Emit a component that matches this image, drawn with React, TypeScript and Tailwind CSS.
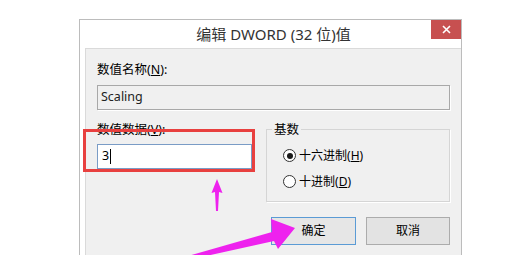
import React from 'react';

const font = "font-['Noto_Sans','Noto_Sans_CJK_SC',sans-serif]";

function Radio({ checked, label, accel }: { checked?: boolean; label: string; accel: string }) {
  return (
    <div className="flex h-[17px] items-center">
      <span className="flex h-[13px] w-[13px] items-center justify-center rounded-full border border-[#333] bg-white">
        {checked && <span className="h-[6px] w-[6px] rounded-full bg-[#1a1a1a]" />}
      </span>
      <span className="ml-[3px] text-[12px] leading-[17px] text-black">
        {label}(<span className="underline">{accel}</span>)
      </span>
    </div>
  );
}

export default function App() {
  return (
    <div className={`relative h-[255px] w-[521px] overflow-hidden bg-white pl-[79px] pt-[19px] ${font}`}>
      <div className="flex h-[260px] w-[383px] flex-col border-l border-r border-t border-[#bcbcbc] bg-white">
        {/* title bar */}
        <div className="flex h-[28px] items-start">
          <div className="w-[30px]" />
          <div className="flex-1 pl-[6px] pt-[4px] text-center text-[15px] leading-[20px] text-[#333]">
            编辑 DWORD (32 位)值
          </div>
          <div className="flex h-[19px] w-[30px] items-center justify-center bg-[#c75050]">
            <svg width="9" height="9" viewBox="0 0 9 9">
              <path d="M1 1 L8 8 M8 1 L1 8" stroke="#fff" strokeWidth="1.6" />
            </svg>
          </div>
        </div>

        {/* client area */}
        <div className="ml-[5px] flex-1 border-l border-t border-[#dadada] bg-[#f0f0f0] px-[11px] pt-[12px]">
          <div className="text-[12.5px] leading-[17px] text-black">
            数值名称(<span className="underline">N</span>):
          </div>
          <div className="mt-[7px] flex h-[25px] items-center border border-[#a8a8a8] bg-[#f0f0f0] pl-[3px] text-[12.5px] text-[#222] shadow-[1px_1px_0_#fff]">
            Scaling
          </div>

          <div className="mt-[11px] flex gap-[14px]">
            <div className="relative w-[155px]">
              <div className="text-[12.5px] leading-[17px] text-black">
                数值数据(<span className="underline">V</span>):
              </div>
              <div className="mt-[6px] flex h-[25px] items-center border border-[#7a9cc6] bg-white pl-[4px] text-[12.5px] text-black">
                3<span className="ml-[1px] h-[15px] w-[1px] bg-black" />
              </div>
              <div className="absolute left-[-14px] top-[8px] h-[43px] w-[172px] border-[3px] border-[#e8403f]" />
            </div>

            <fieldset className="h-[81px] flex-1 border border-[#d5d5d5] pl-[5px] shadow-[1px_1px_0_#fff]">
              <legend className="px-[2px] text-[12.5px] leading-[17px] text-black">基数</legend>
              <div className="mt-[9px] flex flex-col gap-[9px] pl-[11px]">
                <Radio checked label="十六进制" accel="H" />
                <Radio label="十进制" accel="D" />
              </div>
            </fieldset>
          </div>

          <div className="mt-[15px] flex justify-end gap-[10px]">
            <button className="flex h-[28px] w-[85px] items-center justify-center border border-[#5b9bd5] bg-[#e6e6e6] text-[12px] text-black">
              确定
            </button>
            <button className="flex h-[28px] w-[84px] items-center justify-center border border-[#acacac] bg-[#e3e3e3] text-[12px] text-black">
              取消
            </button>
          </div>
        </div>
      </div>

      {/* annotation arrows */}
      <svg className="pointer-events-none absolute left-0 top-0" width="521" height="255" viewBox="0 0 521 255">
        <polygon points="216,211 218,211 219,192 222.5,193 217,179 211.5,193 215,192" fill="#ee22ee" />
        <polygon points="188,256 272,232 271,219 295,228 278,249 274,241 197,258" fill="#ee22ee" />
      </svg>
    </div>
  );
}
